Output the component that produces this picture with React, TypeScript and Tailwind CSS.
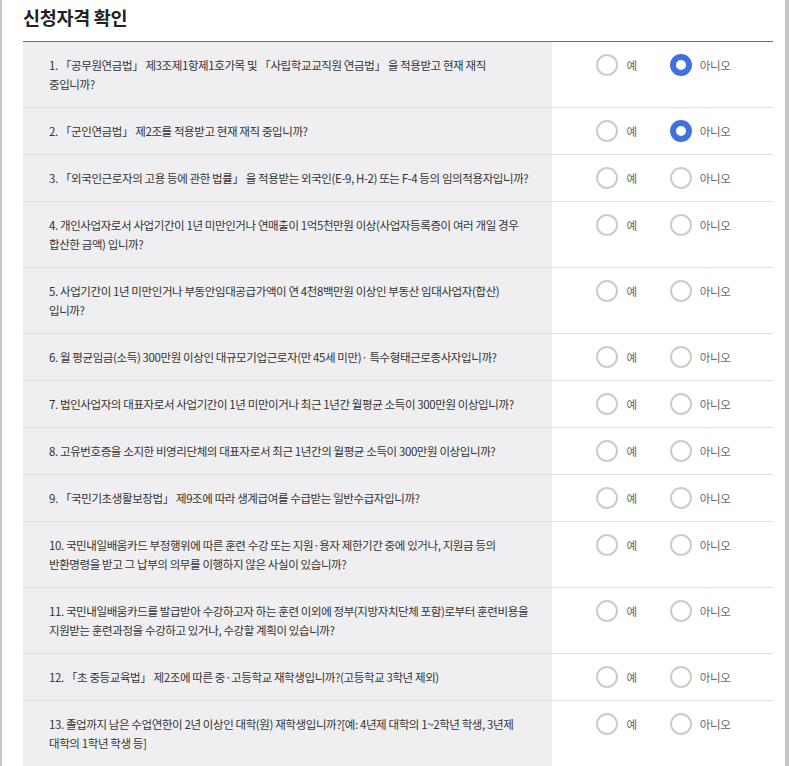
import { useState } from "react";

type TQuestion = {
  id: number;
  text: string;
};

const questions: TQuestion[] = [
  { id: 1, text: "1. 「공무원연금법」 제3조제1항제1호가목 및 「사립학교교직원 연금법」 을 적용받고 현재 재직 중입니까?" },
  { id: 2, text: "2. 「군인연금법」 제2조를 적용받고 현재 재직 중입니까?" },
  { id: 3, text: "3. 「외국인근로자의 고용 등에 관한 법률」 을 적용받는 외국인(E-9, H-2) 또는 F-4 등의 임의적용자입니까?" },
  { id: 4, text: "4. 개인사업자로서 사업기간이 1년 미만인거나 연매출이 1억5천만원 이상(사업자등록증이 여러 개일 경우 합산한 금액) 입니까?" },
  { id: 5, text: "5. 사업기간이 1년 미만인거나 부동안임대공급가액이 연 4천8백만원 이상인 부동산 임대사업자(합산) 입니까?" },
  { id: 6, text: "6. 월 평균임금(소득) 300만원 이상인 대규모기업근로자(만 45세 미만)· 특수형태근로종사자입니까?" },
  { id: 7, text: "7. 법인사업자의 대표자로서 사업기간이 1년 미만이거나 최근 1년간 월평균 소득이 300만원 이상입니까?" },
  { id: 8, text: "8. 고유번호증을 소지한 비영리단체의 대표자로서 최근 1년간의 월평균 소득이 300만원 이상입니까?" },
  { id: 9, text: "9. 「국민기초생활보장법」 제9조에 따라 생계급여를 수급받는 일반수급자입니까?" },
  { id: 10, text: "10. 국민내일배움카드 부정행위에 따른 훈련 수강 또는 지원·용자 제한기간 중에 있거나, 지원금 등의 반환명령을 받고 그 납부의 의무를 이행하지 않은 사실이 있습니까?" },
  { id: 11, text: "11. 국민내일배움카드를 발급받아 수강하고자 하는 훈련 이외에 정부(지방자치단체 포함)로부터 훈련비용을 지원받는 훈련과정을 수강하고 있거나, 수강할 계획이 있습니까?" },
  { id: 12, text: "12. 「초 중등교육법」 제2조에 따른 중·고등학교 재학생입니까?(고등학교 3학년 제외)" },
  { id: 13, text: "13. 졸업까지 남은 수업연한이 2년 이상인 대학(원) 재학생입니까?[예: 4년제 대학의 1~2학년 학생, 3년제 대학의 1학년 학생 등]" },
];

function Radio({ checked, label, onClick }: { checked: boolean; label: string; onClick: () => void }) {
  return (
    <button type="button" onClick={onClick} className="flex items-center gap-[8px] cursor-pointer">
      <span
        className={`block w-[22px] h-[22px] rounded-full bg-white ${
          checked ? "border-[6px] border-[#3f72de]" : "border-2 border-[#cccccc]"
        }`}
      />
      <span className="text-[11.5px] leading-[19px] tracking-[-0.3px] text-[#666]">{label}</span>
    </button>
  );
}

export default function App() {
  const [answers, setAnswers] = useState<Record<number, "yes" | "no">>({ 1: "no", 2: "no" });

  return (
    <div
      className="min-h-[766px] bg-white border-l-2 border-r-4 border-[#c6c6c6] pl-[21px] pr-[12px]"
      style={{ fontFamily: '"Noto Sans CJK KR", "Noto Sans", sans-serif' }}
    >
      <h2 className="pt-[3px] h-[41px] text-[18.5px] leading-[28px] font-bold tracking-[-0.3px] text-[#222]">
        신청자격 확인
      </h2>
      <div className="border-t border-[#6b6b6b]">
        {questions.map((q) => (
          <div key={q.id} className="flex border-b border-[#e1e1e1]">
            <div className="w-[529px] shrink-0 bg-[#efeff1] pl-[26px] pr-[21px] pt-[14px] pb-[13px] text-[11.5px] leading-[19px] tracking-[-0.4px] text-[#333] break-keep">
              {q.text}
            </div>
            <div className="flex-1 flex justify-center items-start gap-[33px] pt-[12px] pl-[2px]">
              <Radio
                checked={answers[q.id] === "yes"}
                label="예"
                onClick={() => setAnswers({ ...answers, [q.id]: "yes" })}
              />
              <Radio
                checked={answers[q.id] === "no"}
                label="아니오"
                onClick={() => setAnswers({ ...answers, [q.id]: "no" })}
              />
            </div>
          </div>
        ))}
      </div>
    </div>
  );
}
